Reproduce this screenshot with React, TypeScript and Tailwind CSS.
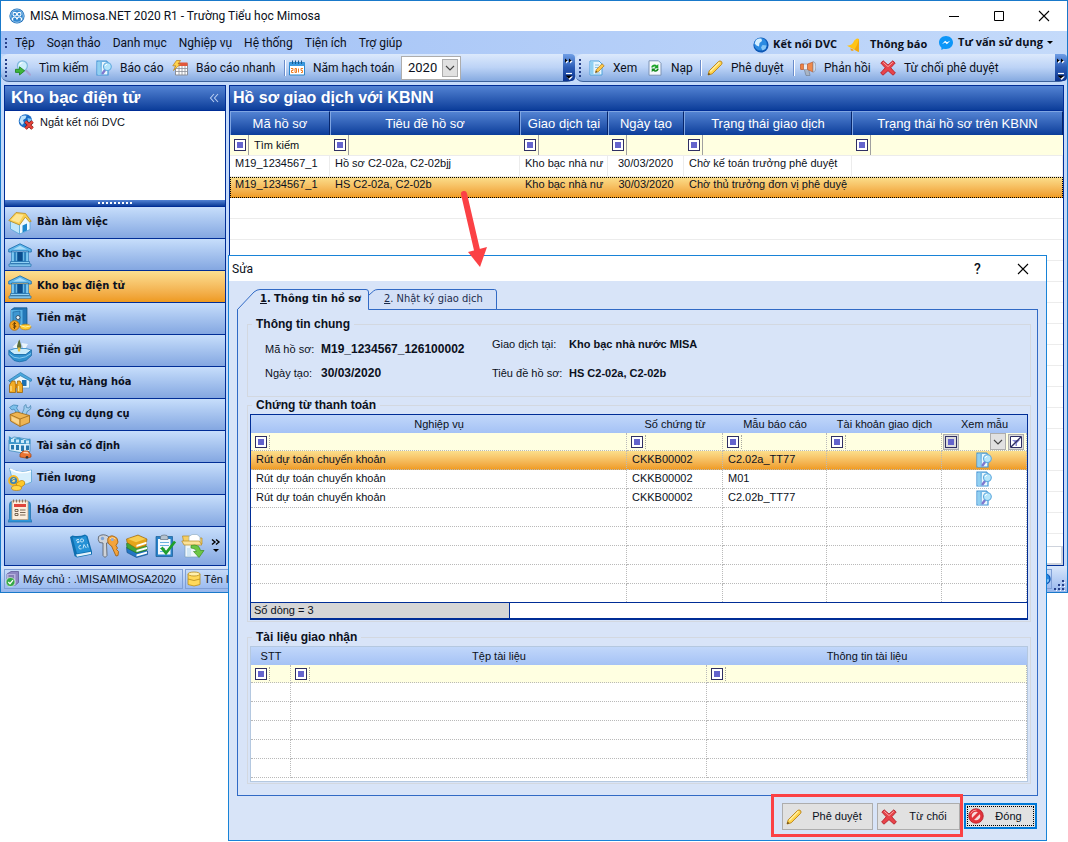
import React from "react";

type IconProps = { className?: string };

const FONT_UI = "font-['Roboto','Noto_Sans',sans-serif]";
const FONT_MENU_BOLD = "font-['Open_Sans','Noto_Sans',sans-serif]";
const FONT_GRID = "font-['Liberation_Sans',Arial,sans-serif]";
const FONT_NAV = "font-['DejaVu_Sans_Condensed','DejaVu_Sans',sans-serif]";

/* ---------- Icons ---------- */

function LogoIcon() {
  return (
    <svg viewBox="0 0 16 16" className="size-4" aria-hidden="true">
      <circle cx="8" cy="8" r="7.6" fill="#1a6cb8" />
      <circle cx="8" cy="8" r="6.3" fill="#2f86cf" stroke="#b9dcf7" strokeWidth=".8" />
      <circle cx="5.800" cy="6.200" r="1.800" fill="none" stroke="#fff" strokeWidth="1.100" />
      <circle cx="10.200" cy="6.200" r="1.800" fill="none" stroke="#fff" strokeWidth="1.100" />
      <path d="M3.600 12.200V10.500Q4 9 5.800 9T8 11.500Q8.400 9 10.200 9T12.400 10.500V12.200" fill="none" stroke="#fff" strokeWidth="1.200" />
    </svg>
  );
}

function SearchGoIcon() {
  return (
    <svg viewBox="0 0 16 16" className="size-4" aria-hidden="true">
      <path d="M11 10.500L15 14.800" stroke="#a9a4d6" strokeWidth="2.200" strokeLinecap="round" />
      <circle cx="7.400" cy="5.800" r="5" fill="#cdeefb" stroke="#7fb8dc" strokeWidth="1.200" />
      <path d="M4.500 4.500a3.400 3.400 0 0 1 3-2" stroke="#fff" strokeWidth="1.200" fill="none" />
      <path d="M0.500 9.300h4V6.800l5.200 4-5.200 4.200v-2.600h-4z" fill="#3eb53a" stroke="#19801c" strokeWidth=".8" />
    </svg>
  );
}

function ReportIcon({ className = "size-4" }: IconProps) {
  return (
    <svg viewBox="0 0 16 16" className={className} aria-hidden="true">
      <path d="M1 1.200h9.500l1.500 1.500V15H1z" fill="#eaf7fe" stroke="#4296d6" strokeWidth="1.200" />
      <path d="M1.600 1.800h3.800v3L4.800 8v6.400H1.600z" fill="#8fd0f2" />
      <path d="M5.200 2v12.500" stroke="#4296d6" strokeWidth=".8" />
      <path d="M6.700 13.200L9.200 9.800" stroke="#7f78cf" strokeWidth="2.400" strokeLinecap="round" />
      <circle cx="11.400" cy="6.600" r="3.900" fill="#b5e5fb" stroke="#5fa9dd" strokeWidth="1.100" />
      <path d="M9 6a2.400 2.400 0 0 1 2.200-1.700" stroke="#fff" fill="none" />
    </svg>
  );
}

function QuickReportIcon() {
  return (
    <svg viewBox="0 0 16 16" className="size-4" aria-hidden="true">
      <path d="M3.500 3.500h12v11.500h-12z" fill="#fff" stroke="#8a8f99" />
      <path d="M6 2.500h9.500V6H5z" fill="#e2573b" />
      <path d="M4 8.500h11M4 11.500h11M7 6v9M10 6v9M13 6v9" stroke="#8a8f99" strokeWidth=".8" />
      <path d="M4.500 0.500h4L6 4h2.500L1.500 10.500L3.600 5.800H.8z" fill="#ffd34e" stroke="#b77d13" strokeWidth=".7" />
    </svg>
  );
}

function CalendarIcon() {
  return (
    <svg viewBox="0 0 16 16" className="size-4" aria-hidden="true">
      <path d="M.5 2.500h15v12.500H.5z" fill="#fff" stroke="#2b86c9" />
      <path d="M.5 2.500h15v3.500H.5z" fill="#3b9ae0" />
      <path d="M3.500 .5v3.500M6.500 .5v3.500M9.500 .5v3.500M12.500 .5v3.500" stroke="#1b5c94" strokeWidth="1" />
      <path d="M2 8.500h2v2H2.500v2H4.500M6 8.500h1.500v4H6zM9.500 8.500v4M14 8.500h-2v2h1.500v2H12" fill="none" stroke="#ef7d22" strokeWidth="1" />
    </svg>
  );
}

function NoteEditIcon() {
  return (
    <svg viewBox="0 0 16 16" className="size-4" aria-hidden="true">
      <path d="M1 1h9l3 3v11H1z" fill="#e6f5fd" stroke="#4ea3dc" />
      <path d="M1.500 1.500h3v13h-3z" fill="#8fd0f2" />
      <path d="M6 5h4M6 7.500h3M6 13h5" stroke="#8ac0e2" />
      <path d="M6.500 12.500L7.200 9.800L13 3.800L15.200 5.800L9.300 11.700z" fill="#ffc94a" stroke="#a8741a" strokeWidth=".7" />
      <path d="M6.500 12.500l.5-1.700 1.200 1.200z" fill="#4a3718" />
    </svg>
  );
}

function RefreshPageIcon() {
  return (
    <svg viewBox="0 0 16 16" className="size-4" aria-hidden="true">
      <path d="M2 .8h9.500l2.500 2.500V15.200H2z" fill="#f6f9fd" stroke="#7c93b5" />
      <path d="M4.200 7.400c.5-3 4-3.600 5.700-2l1.400-1.400v4.200H7.100l1.400-1.400c-1-.7-2.200-.3-2.500.6z" fill="#1da427" />
      <path d="M11.800 8.800c-.5 3-4 3.600-5.700 2l-1.400 1.400V8.500h4.200L7.500 9.900c1 .7 2.200.3 2.500-1.100z" fill="#12871c" />
    </svg>
  );
}

function PencilIcon() {
  return (
    <svg viewBox="0 0 16 16" className="size-4" aria-hidden="true">
      <path d="M1 15L2.200 10.800L11.500 1.500Q13 .3 14.500 1.600Q15.700 3 14.500 4.500L5.200 13.800z" fill="#ffd34a" stroke="#b98218" strokeWidth=".9" />
      <path d="M3.300 11.500L12.500 2.300" stroke="#fff0a8" strokeWidth="1.300" />
      <path d="M1 15l.7-2.300 1.700 1.600z" fill="#5d431a" />
    </svg>
  );
}

function MegaphoneIcon() {
  return (
    <svg viewBox="0 0 16 16" className="size-4" aria-hidden="true">
      <path d="M4 8.500h4.500l1.500 7H6z" fill="#a9b4c4" stroke="#6d7889" strokeWidth=".6" />
      <path d="M1 4h6.500v5.500H1q-1-2.700 0-5.500z" fill="#e9ecf1" stroke="#8e99aa" strokeWidth=".6" />
      <path d="M.7 4h2.800v5.500H.7q-.8-2.700 0-5.500z" fill="#ee8446" stroke="#b9542a" strokeWidth=".6" />
      <path d="M7.500 4L13 2v10L7.500 9.500z" fill="#f08a4c" stroke="#b9542a" strokeWidth=".6" />
      <path d="M13 1.600q2.800.2 2.800 5.200T13 12.200z" fill="#d9dee6" stroke="#7c8798" strokeWidth=".6" />
    </svg>
  );
}

function CrossIcon() {
  return (
    <svg viewBox="0 0 16 16" className="size-4" aria-hidden="true">
      <path d="M3.200.8L8 5L12.800.8L15.200 3L10.800 7.800L15.400 13L13 15.200L8 10.700L3 15.200L.6 13L5.200 7.800L.8 3z" fill="#e8434a" stroke="#b01b24" strokeWidth=".8" />
      <path d="M3.200 2.300L8 6.600L12.800 2.300" fill="none" stroke="#f8a3a4" strokeWidth="1" />
    </svg>
  );
}

function GlobeIcon({ className = "size-4" }: IconProps) {
  return (
    <svg viewBox="0 0 16 16" className={className} aria-hidden="true">
      <circle cx="8" cy="8" r="7.600" fill="#0d57b4" />
      <circle cx="7.500" cy="7.300" r="6.300" fill="#2c8be2" />
      <path d="M3 3Q6 .9 8.500 1.800L9 4L6.500 6L6 9.500L3.500 8.500L1.600 6.500z" fill="#d6efff" />
      <path d="M9.500 8l4.200.5-1.200 3.500-3 1.500-1.500-3z" fill="#86c6f7" />
    </svg>
  );
}

function GlobeOffIcon() {
  return (
    <svg viewBox="0 0 16 16" className="size-4" aria-hidden="true">
      <circle cx="7.500" cy="7" r="6.800" fill="#1a6cc6" />
      <path d="M3 2.500Q6 .8 8.500 1.800L7.500 4.500L5 6L6 9L4 11L1.500 7.500z" fill="#bfe4fb" />
      <path d="M9.500 4l4 1v3l-3 1z" fill="#7fc3f2" />
      <path d="M7.500 7.500L14.500 14.500M14.500 7.500L7.500 14.500" stroke="#7d1712" strokeWidth="3.400" />
      <path d="M7.500 7.500L14.500 14.500M14.500 7.500L7.500 14.500" stroke="#e8443c" strokeWidth="2.200" />
    </svg>
  );
}

function BellIcon() {
  return (
    <svg viewBox="0 0 16 16" className="size-4" aria-hidden="true">
      <path d="M9.500 2.500Q11 .8 13 2L12.800 15L1 8.800Q6.500 8 7.500 5Q8 3.400 9.500 2.500z" fill="#ffc417" />
      <path d="M13 2L12.800 15L8.500 12.700Q11.500 8 13 2z" fill="#f3a70b" />
      <path d="M4.500 11.200q-.3 2.500 2.300 2.600l1.200-.9z" fill="#f29c0c" />
    </svg>
  );
}

function MessengerIcon() {
  return (
    <svg viewBox="0 0 16 16" className="size-4" aria-hidden="true">
      <path d="M8 1C4 1 1 3.900 1 7.500c0 2 .9 3.700 2.400 4.900V15l2.300-1.300c.7.200 1.500.3 2.300.3 4 0 7-2.900 7-6.500S12 1 8 1z" fill="#0d96f8" />
      <path d="M3.800 9.200L7.200 5.700L9 7.300L12.200 5.700L8.900 9.200L7.100 7.600z" fill="#fff" />
    </svg>
  );
}

function NoEntryIcon() {
  return (
    <svg viewBox="0 0 16 16" className="size-4" aria-hidden="true">
      <circle cx="8" cy="8" r="7.300" fill="#e0333b" stroke="#b3161f" strokeWidth=".7" />
      <circle cx="8" cy="8" r="4.300" fill="#f8dadb" />
      <path d="M4.500 11.500L11.500 4.500" stroke="#e0333b" strokeWidth="2.800" />
      <path d="M2.500 5.500Q4.500 1.800 8.500 2" stroke="#f79a9c" fill="none" />
    </svg>
  );
}

function HomeIcon() {
  return (
    <svg viewBox="0 0 24 24" className="size-6" aria-hidden="true">
      <path d="M2.500 10L11.500 13.500V23L2.500 18z" fill="#bfe6fb" stroke="#4b9fd4" strokeWidth=".7" />
      <path d="M11.500 13.500L17 5L22 10.500V18.500L11.500 23z" fill="#eef9ff" stroke="#4b9fd4" strokeWidth=".7" />
      <path d="M14.500 14.500L19 12.500V19.500L14.500 21.500z" fill="#1f87cc" />
      <path d="M.8 9.500L8 1.500L17.500 2.500L23.200 10.300L21.500 11L17.300 6.200L11.600 14z" fill="#f8cf51" stroke="#b98a22" strokeWidth=".8" />
      <path d="M3 9L8.500 3L15.500 3.700L11 11.800z" fill="#fde594" />
    </svg>
  );
}

function BankIcon() {
  return (
    <svg viewBox="0 0 24 24" className="size-6" aria-hidden="true">
      <path d="M3.500 9h17v11h-17z" fill="#1b78bf" />
      <path d="M9.500 9h5v9h-5z" fill="#0b4d8d" />
      <path d="M12 .8L23.300 6.300V9H20.500V8H3.500V9H.7V6.300z" fill="#5cb5ea" stroke="#1b6aa8" strokeWidth=".8" />
      <path d="M12 2.800l7 3.700H5z" fill="#a9dcf8" />
      <path d="M3.500 9h2.800v10H3.500zM7.500 9h1.600v9H7.500zM14.900 9h1.600v9h-1.600zM17.700 9h2.800v10h-2.800z" fill="#7ccaf3" stroke="#19639f" strokeWidth=".4" />
      <path d="M2.500 18.500h19v2h-19zM1 21h22v2.300H1z" fill="#8fd0f5" stroke="#1b6aa8" strokeWidth=".7" />
    </svg>
  );
}

function SafeIcon() {
  return (
    <svg viewBox="0 0 24 24" className="size-6" aria-hidden="true">
      <path d="M3 3L6 .8H19V17L16.500 19H3z" fill="#2478b8" stroke="#114e80" strokeWidth=".7" />
      <path d="M3 3H14.500V19H3z" fill="#58b0e3" />
      <path d="M5 5l7-1v13l-7 1z" fill="#3f97d1" stroke="#17609b" strokeWidth=".6" />
      <circle cx="10" cy="10.500" r="2" fill="#e9f5fc" stroke="#2b3d52" strokeWidth=".8" />
      <ellipse cx="17.500" cy="20" rx="5.500" ry="2.800" fill="#ffcb2e" stroke="#c28309" strokeWidth=".7" />
      <path d="M12 18.500q5 3 11 .3" stroke="#fff2a3" fill="none" />
      <circle cx="6.500" cy="18.500" r="4.800" fill="#f5a31f" stroke="#b16f08" strokeWidth=".8" />
      <path d="M8 16.500q-3-.8-3 .8t3 1.800q0 2-3 1M6.500 15v7" stroke="#6d4507" fill="none" />
    </svg>
  );
}

function DepositIcon() {
  return (
    <svg viewBox="0 0 24 24" className="size-6" aria-hidden="true">
      <path d="M4.500 8l5-5v8zM13.500 4l6.500 1-4 7z" fill="#f1f8fc" opacity=".9" />
      <path d="M9 7L10.500 2l1-1.500L13.300 7l-.8 5h-3z" fill="#5d6d3a" />
      <path d="M.8 11.500L7 9.500h11L23.500 11 18 15.500H6z" fill="#c9ebfb" stroke="#2784c0" strokeWidth=".8" />
      <path d="M.8 11.500L6 15.500H18L23.500 11V16.500L18 21.500Q11 24 6 21.500L.8 16z" fill="#2f91d0" stroke="#17659f" strokeWidth=".7" />
      <path d="M1.500 15q4 4.500 10 4.200T23 14.500" stroke="#86c9ef" fill="none" />
      <path d="M9.500 8.500h3l-.5 4h-2z" fill="#e7bf43" />
    </svg>
  );
}

function WarehouseIcon() {
  return (
    <svg viewBox="0 0 24 24" className="size-6" aria-hidden="true">
      <path d="M3 9L12.500 4L21.500 9v8H3z" fill="#eaf7fe" stroke="#4e9bc9" strokeWidth=".6" />
      <path d="M12.500 1.500L24 8.500L23 10.500L12.500 4.800L2 11L.5 9.500z" fill="#4ba8dd" stroke="#1d6ca3" strokeWidth=".6" />
      <path d="M14 9h4.500v6H14z" fill="#1d72b3" />
      <path d="M1.500 14l2.500-4h3l.5 4v7.500h-6zM9 14l.5-4h2.500l2.500 4v7.500H9z" fill="#f4ad26" stroke="#9b630b" strokeWidth=".8" />
      <path d="M3 15v5M10.500 15v5" stroke="#ffe08a" strokeWidth="1.300" />
      <path d="M7 13h2v4H7z" fill="#c77d10" />
    </svg>
  );
}

function ToolboxIcon() {
  return (
    <svg viewBox="0 0 24 24" className="size-6" aria-hidden="true">
      <path d="M1.500 4.500Q5 .5 10 2.500l-1.500 2.500L14 13l-2.500 1.500L6 6 4 7z" fill="#7cc0ea" stroke="#397fb0" strokeWidth=".7" />
      <path d="M13 13l3-7q-1-3.500 2-4.500l.5 3 2.500.5 1.500-2.500q1.500 4-3 5.500L16.500 15z" fill="#9fcdee" stroke="#4583ac" strokeWidth=".7" />
      <path d="M2 11.500L9 9l12.500 3.500v7L12 23.500L2.500 18z" fill="#f0b552" stroke="#9c6718" strokeWidth=".8" />
      <path d="M2 11.500l10 4.500 9.500-3.500M12 16v7.500" stroke="#9c6718" strokeWidth=".8" fill="none" />
      <path d="M3.500 13.500l7.500 3.300v4.700l-7-4z" fill="#fad58c" />
    </svg>
  );
}

function AssetIcon() {
  return (
    <svg viewBox="0 0 24 24" className="size-6" aria-hidden="true">
      <path d="M1 5L6 2L22 4.500V16.500L15 18L1 15.500z" fill="#d9effa" stroke="#2b7fb4" strokeWidth=".7" />
      <path d="M.8 1l4.500 3 6-1.500 5 2.500 6-1.500v5.500H1z" fill="#3f96ca" />
      <path d="M3 4h3v3H3zM8 4.500h3v3H8zM13 5h3v3h-3zM18 5.500h3v3h-3z" fill="#c9e9f9" />
      <path d="M3 10h3v4.500H3zM8 10h3v5H8zM13 10.500h3V16h-3zM18 10.500h3V15h-3z" fill="#2777ad" />
      <path d="M12 19l3-3h5l3 3.500v2.500l-4 1.200-7-1.200z" fill="#ea7433" stroke="#9d3f10" strokeWidth=".7" />
      <path d="M15 18l1-1.200h3.500l1.500 2z" fill="#fbd9bd" />
      <circle cx="19" cy="22.300" r="1.300" fill="#333" />
    </svg>
  );
}

function SalaryIcon() {
  return (
    <svg viewBox="0 0 24 24" className="size-6" aria-hidden="true">
      <path d="M1.500 1.500Q12 7 23.500 3V15Q15 20 5 15z" fill="#d7effc" stroke="#5ba5d3" strokeWidth=".8" />
      <path d="M2 2Q12 8 23 4" stroke="#fff" strokeWidth="1.500" fill="none" />
      <circle cx="5.500" cy="13.500" r="4.500" fill="#3c83b5" stroke="#f7b824" strokeWidth="1.800" />
      <path d="M6.800 11.800q-2.500-.8-2.500.6t2.500 1.200q0 2-2.600.8" stroke="#ffe07a" fill="none" />
      <ellipse cx="12.500" cy="17" rx="4.500" ry="3" transform="rotate(-25 12.500 17)" fill="#ffc928" stroke="#c28309" strokeWidth=".7" />
      <ellipse cx="8.500" cy="21" rx="5" ry="2.500" fill="#ffd64a" stroke="#c28309" strokeWidth=".7" />
    </svg>
  );
}

function InvoiceIcon() {
  return (
    <svg viewBox="0 0 24 24" className="size-6" aria-hidden="true">
      <path d="M4 2.500h16Q22.500 2.500 22.500 6V19.500L24 23H0L1.500 19.500V6Q1.500 2.500 4 2.500z" fill="#2f97da" stroke="#1c6ea9" strokeWidth=".7" />
      <path d="M4 2h16V20.500H4z" fill="#fbeedd" stroke="#c2a07c" strokeWidth=".8" />
      <path d="M5.500 .5v3M8.500 .5v3M11.500 .5v3M14.500 .5v3M17.500 .5v3" stroke="#8b7760" />
      <path d="M6 5h12v3H6z" fill="#e0453c" />
      <path d="M7 10.500h3v2H7zM7 14.500h3v2H7z" fill="none" stroke="#6a5846" strokeWidth=".9" />
      <path d="M12 11h5.500M12 13.500h5.500M12 16h5.500" stroke="#6a5846" strokeWidth=".9" />
    </svg>
  );
}

function LedgerIcon() {
  return (
    <svg viewBox="0 0 24 24" className="size-6" aria-hidden="true">
      <path d="M1 3L3.500 1.500Q10 3 16 .5L18.500 2L23 17.500V20.500L8 23.500L5.500 22z" fill="#0f6fb0" />
      <path d="M3.500 3.300Q10 4.500 17 1.800L21.500 17L8 19.500z" fill="#2592d6" />
      <path d="M7 20.500L22 17.800V20L8 22.800z" fill="#e3f2fb" />
      <path d="M10 5.500q-3-.3-2.600 1t2.700.8q.6 1.800-2.200 1.300M12 5q2-.6 2.500 1t-1.300 2-1.900-1.500zM12 11.500q-2.500-.3-2.200 2t2.800 1.300M14 14.500l1-4 2.300 3.500M18.300 10l.9 3.500" stroke="#cdeafb" strokeWidth=".9" fill="none" />
    </svg>
  );
}

function KeysIcon() {
  return (
    <svg viewBox="0 0 24 24" className="size-6" aria-hidden="true">
      <path d="M1.500 2.500q4.500-3.500 10 0l.5 6-2.500.5.5 12.500-2 2-2-2V9L2.500 8.500Q.5 6 1.500 2.500z" fill="#cfd3d9" stroke="#5f656f" strokeWidth=".9" />
      <circle cx="5.500" cy="4.500" r="1.700" fill="#7fa4d6" />
      <path d="M11 4q3.500-4.500 9 .3 2.500 4-1 7.200l1.500 2.500-1 1.500 2 2-.5 4-2 .5-4.500-10q-5-2.500-3.500-8z" fill="#f3a43c" stroke="#a0631a" strokeWidth=".9" />
      <path d="M12.500 5q3-3 6 0" stroke="#ffdc9c" fill="none" />
      <circle cx="15.300" cy="5.500" r="1.500" fill="#8eace0" />
    </svg>
  );
}

function BooksIcon() {
  return (
    <svg viewBox="0 0 24 24" className="size-6" aria-hidden="true">
      <path d="M1.500 13.500L10 11L22.500 17v3.500L11.500 23.500L2 18.500z" fill="#2477c4" stroke="#134a83" strokeWidth=".6" />
      <path d="M11.500 20.500l10.500-3v2L11.500 22.500z" fill="#fff" />
      <path d="M1.500 9.500L10 7l12 5.500V16l-10.500 3L2 14z" fill="#3fa63a" stroke="#1e6c20" strokeWidth=".6" />
      <path d="M11.500 16l10.500-3v2L11.500 18z" fill="#fff" />
      <path d="M1.500 5L13 1l9 4-1 6.500-9.500 3-9.500-6z" fill="#e5a51b" stroke="#8d5d0a" strokeWidth=".6" />
      <path d="M3 5l10-3.300L20.500 5 11 8.300z" fill="#f7cd52" />
      <path d="M11.500 11l10-3.200v2l-10 3.200z" fill="#fff" />
    </svg>
  );
}

function TaskIcon() {
  return (
    <svg viewBox="0 0 24 24" className="size-6" aria-hidden="true">
      <path d="M3 2.500h16.500v20H3z" fill="#2a82c9" stroke="#165b94" strokeWidth=".7" />
      <path d="M5 5h12.500v15.500H5z" fill="#f4fafe" />
      <path d="M7.500 3q0-2 3.700-2T15 3v2.500H7.500z" fill="#b5c2cf" stroke="#63717f" strokeWidth=".7" />
      <path d="M7 8.500h9M7 11.500h9M7 14.500h5M7 17.500h4" stroke="#6ab0e0" />
      <path d="M8.500 13.500l4.500 5.500L22 7.500" stroke="#1f9f2c" strokeWidth="2.800" fill="none" />
    </svg>
  );
}

function ExportIcon() {
  return (
    <svg viewBox="0 0 24 24" className="size-6" aria-hidden="true">
      <path d="M4 9h13v14H4z" fill="#eef6fb" stroke="#7a9db9" strokeWidth=".7" />
      <path d="M1.500 2h7l1.500 2H21v6H3z" fill="#f6cf65" stroke="#b58a24" strokeWidth=".7" />
      <path d="M8 2.500l3-2h5l3 2.500V9H8z" fill="#fff" stroke="#8aa7bd" strokeWidth=".6" />
      <path d="M.8 7h17.500l2.500 4H3z" fill="#fbe29a" stroke="#b58a24" strokeWidth=".7" />
      <path d="M6 14h4v8H6z" fill="#cfe6f5" />
      <path d="M10 11.500q8-2 9.500 5H23l-5 7-5.500-6h3q-1-3.500-5.500-3.500z" fill="#6cc644" stroke="#3b8f1f" strokeWidth=".7" />
    </svg>
  );
}

function ServerIcon() {
  return (
    <svg viewBox="0 0 16 16" className="size-4 shrink-0" aria-hidden="true">
      <path d="M2 3l4-2.500h7.500v11L10.500 14H2z" fill="#8d86c2" stroke="#57508f" strokeWidth=".7" />
      <path d="M2 3h8.500v11H2z" fill="#b7b2de" />
      <path d="M3.500 5h5.500M3.500 7h5.500" stroke="#514a8c" />
      <circle cx="5.500" cy="11" r="4.500" fill="#35a845" stroke="#fff" strokeWidth=".6" />
      <path d="M3.300 11l1.700 1.700 3-3.500" stroke="#fff" strokeWidth="1.300" fill="none" />
    </svg>
  );
}

function DatabaseIcon() {
  return (
    <svg viewBox="0 0 16 16" className="size-4 shrink-0" aria-hidden="true">
      <path d="M2 3v10.500q6 3 12 0V3z" fill="#ffd95a" stroke="#b88d1c" strokeWidth=".8" />
      <ellipse cx="8" cy="3" rx="6" ry="2" fill="#fff0ad" stroke="#b88d1c" strokeWidth=".8" />
      <path d="M2 8q6 3 12 0" stroke="#b88d1c" strokeWidth=".8" fill="none" />
    </svg>
  );
}

function ChevronDown() {
  return (
    <svg viewBox="0 0 10 6" className="h-1.5 w-2.5" aria-hidden="true">
      <path d="M1 1l4 4 4-4" fill="none" stroke="#444" strokeWidth="1.100" />
    </svg>
  );
}

/* ---------- Small parts ---------- */

function Grip({ count }: { count: number }) {
  return (
    <span className="flex w-2.5 shrink-0 flex-col items-start gap-0.5 self-center" aria-hidden="true">
      {Array.from({ length: count }, (_, i) => (
        <span key={i} className="size-0.5 bg-[#27418a]" />
      ))}
    </span>
  );
}

function OverflowButton({ label }: { label: string }) {
  return (
    <button
      type="button"
      aria-label={label}
      className="flex w-3 shrink-0 items-center justify-center self-stretch rounded-r-sm bg-linear-to-b from-[#6f9ee6] via-[#2c5cb5] to-[#0a3390]"
    >
      <svg viewBox="0 0 10 24" className="h-6 w-2.5" aria-hidden="true">
        <path d="M2 3.500l2.500 2L2 7.500zM6 3.500l2.500 2L6 7.500z" fill="#fff" />
        <path d="M1 2.500l2.500 2L1 6.500zM5 2.500l2.500 2L5 6.500z" fill="#000" />
        <path d="M2 17.500h6" stroke="#fff" strokeWidth="1.200" />
        <path d="M2.500 20.500h6.500L5.700 24z" fill="#fff" />
        <path d="M1.500 19.500H8L4.700 22.800z" fill="#000" />
      </svg>
    </button>
  );
}

function FilterButton({ label, raised = false }: { label: string; raised?: boolean }) {
  return (
    <button
      type="button"
      aria-label={`Điều kiện lọc ${label}`}
      className={
        raised
          ? "flex size-4 shrink-0 items-center justify-center border border-[#adadad] bg-[#dcdcdc]"
          : "flex size-3 shrink-0 items-center justify-center"
      }
    >
      <span className={`flex size-3 items-center justify-center border border-[#2f2f63] ${raised ? "" : "bg-white"}`}>
        <span className="size-1.5 bg-[#6464cc]" />
      </span>
    </button>
  );
}

function FilterCell({ label, value, dotted = false }: { label: string; value?: string; dotted?: boolean }) {
  return (
    <div className="flex h-full items-center pl-1">
      <FilterButton label={label} />
      <input
        type="text"
        aria-label={`Lọc ${label}`}
        defaultValue={value}
        className={
          dotted
            ? "ml-0.5 h-3.5 w-full min-w-0 border-l border-dotted border-[#a8a8a0] bg-transparent pl-1 outline-none"
            : "ml-0.5 h-5 w-full min-w-0 border-l border-[#a0a0a0] bg-transparent pl-[5px] outline-none"
        }
      />
    </div>
  );
}

function ToolButton({ icon, label, width }: { icon: React.ReactNode; label: string; width: string }) {
  return (
    <button type="button" className={`flex shrink-0 items-center gap-2 whitespace-nowrap ${width}`}>
      {icon}
      {label}
    </button>
  );
}

function Separator() {
  return <span className="h-4 w-0.5 shrink-0 self-center border-r border-white bg-[#6a8ccb]" aria-hidden="true" />;
}

/* ---------- Main window ---------- */

const menuItems = ["Tệp", "Soạn thảo", "Danh mục", "Nghiệp vụ", "Hệ thống", "Tiện ích", "Trợ giúp"];

function TitleBar() {
  return (
    <header className="flex h-[30px] items-center bg-white pl-2">
      <LogoIcon />
      <h1 className="ml-[5px] flex-1 text-xs">MISA Mimosa.NET 2020 R1 - Trường Tiểu học Mimosa</h1>
      <button type="button" aria-label="Thu nhỏ" className="flex h-full w-[45px] items-center justify-center">
        <svg viewBox="0 0 12 12" className="size-3" aria-hidden="true"><path d="M1 6.500h10" stroke="#000" /></svg>
      </button>
      <button type="button" aria-label="Phóng to" className="flex h-full w-[45px] items-center justify-center">
        <svg viewBox="0 0 12 12" className="size-3" aria-hidden="true"><path d="M1.500 1.500h9v9h-9z" stroke="#000" fill="none" /></svg>
      </button>
      <button type="button" aria-label="Đóng cửa sổ" className="flex h-full w-[46px] items-center justify-center">
        <svg viewBox="0 0 12 12" className="size-3" aria-hidden="true"><path d="M1 1l10 10M11 1L1 11" stroke="#000" strokeWidth="1.100" /></svg>
      </button>
    </header>
  );
}

function MenuBar() {
  return (
    <div className="flex h-[23px] items-center bg-linear-to-r from-[#9ebef5] to-[#c4dafa] pl-1">
      <Grip count={3} />
      <nav className="flex flex-1 gap-3">
        {menuItems.map((item) => (
          <button key={item} type="button" className="text-xs leading-5 whitespace-nowrap">
            {item}
          </button>
        ))}
      </nav>
      <div className={`flex items-center pr-3.5 text-[11px] font-bold whitespace-nowrap ${FONT_MENU_BOLD}`}>
        <button type="button" className="flex w-[93px] items-center gap-1 pt-1">
          <GlobeIcon />
          Kết nối DVC
        </button>
        <button type="button" className="flex w-[92px] items-center gap-2 pt-1">
          <BellIcon />
          Thông báo
        </button>
        <button type="button" className="flex items-center gap-1">
          <MessengerIcon />
          Tư vấn sử dụng
          <span className="border-x-[3px] border-t-[3px] border-x-transparent border-t-black" aria-hidden="true" />
        </button>
      </div>
    </div>
  );
}

function ToolBar() {
  const strip = "flex border-b border-[#3b619c] bg-linear-to-b from-[#dce9fc] via-[#bcd3f6] to-[#86aae0]";
  return (
    <div className="flex h-7 bg-[#c4dafa] text-xs">
      <div className={`w-[574px] shrink-0 rounded-lg pl-1 ${strip}`}>
        <Grip count={5} />
        <div className="flex flex-1">
          <ToolButton icon={<SearchGoIcon />} label="Tìm kiếm" width="w-[81px]" />
          <ToolButton icon={<ReportIcon />} label="Báo cáo" width="w-[76px]" />
          <ToolButton icon={<QuickReportIcon />} label="Báo cáo nhanh" width="w-28" />
          <Separator />
          <label className="flex items-center gap-2 pl-[3px] whitespace-nowrap">
            <CalendarIcon />
            <span className="w-20">Năm hạch toán</span>
            <span className="relative flex h-6 w-[60px] items-center border border-[#adadad] bg-white">
              <select defaultValue="2020" className="h-full w-full appearance-none bg-transparent pl-1.5 text-[13px] outline-none">
                <option>2020</option>
              </select>
              <span className="pointer-events-none absolute inset-y-0.5 right-0.5 flex w-4 items-center justify-center border border-[#adadad] bg-[#e1e1e1]">
                <ChevronDown />
              </span>
            </span>
          </label>
        </div>
        <OverflowButton label="Thêm nút thanh công cụ" />
      </div>
      <div className={`min-w-0 flex-1 rounded-lg pl-1 ${strip}`}>
        <Grip count={5} />
        <div className="flex flex-1">
          <ToolButton icon={<NoteEditIcon />} label="Xem" width="w-[58px]" />
          <ToolButton icon={<RefreshPageIcon />} label="Nạp" width="w-[53px]" />
          <Separator />
          <ToolButton icon={<PencilIcon />} label="Phê duyệt" width="w-[91px] pl-[5px]" />
          <Separator />
          <ToolButton icon={<MegaphoneIcon />} label="Phản hồi" width="w-[85px] pl-[5px]" />
          <ToolButton icon={<CrossIcon />} label="Từ chối phê duyệt" width="w-[140px]" />
        </div>
        <OverflowButton label="Thêm nút duyệt" />
      </div>
    </div>
  );
}

const navItems: { label: string; icon: React.ReactNode; active?: boolean }[] = [
  { label: "Bàn làm việc", icon: <HomeIcon /> },
  { label: "Kho bạc", icon: <BankIcon /> },
  { label: "Kho bạc điện tử", icon: <BankIcon />, active: true },
  { label: "Tiền mặt", icon: <SafeIcon /> },
  { label: "Tiền gửi", icon: <DepositIcon /> },
  { label: "Vật tư, Hàng hóa", icon: <WarehouseIcon /> },
  { label: "Công cụ dụng cụ", icon: <ToolboxIcon /> },
  { label: "Tài sản cố định", icon: <AssetIcon /> },
  { label: "Tiền lương", icon: <SalaryIcon /> },
  { label: "Hóa đơn", icon: <InvoiceIcon /> },
];

const shortcuts: { label: string; icon: React.ReactNode }[] = [
  { label: "Sổ cái", icon: <LedgerIcon /> },
  { label: "Khóa sổ", icon: <KeysIcon /> },
  { label: "Sổ sách", icon: <BooksIcon /> },
  { label: "Công việc", icon: <TaskIcon /> },
  { label: "Xuất khẩu", icon: <ExportIcon /> },
];

const navyHeader = "bg-linear-to-b from-[#5383d3] to-[#0b3d9a] text-white";

function Sidebar() {
  return (
    <aside className="flex w-[222px] shrink-0 flex-col border border-[#002d96] bg-white">
      <div className={`flex h-[25px] items-center justify-between border-b border-[#002d96] px-1.5 ${navyHeader}`}>
        <h2 className={`text-[17px] font-bold ${FONT_GRID}`}>Kho bạc điện tử</h2>
        <button type="button" aria-label="Thu gọn" className="size-2.5">
          <svg viewBox="0 0 10 10" aria-hidden="true"><path d="M5 1L1.500 5L5 9M9 1L5.500 5L9 9" fill="none" stroke="#b7cdf2" strokeWidth="1.100" /></svg>
        </button>
      </div>
      <div className="flex h-[89px] flex-col items-start pt-px pl-[13px]">
        <a href="#ngat-ket-noi" className={`flex h-5 items-center gap-1.5 text-[11px] ${FONT_GRID}`}>
          <GlobeOffIcon />
          Ngắt kết nối DVC
        </a>
      </div>
      <div className={`flex h-1.5 items-center justify-center gap-0.5 ${navyHeader}`} aria-hidden="true">
        {Array.from({ length: 9 }, (_, i) => (
          <span key={i} className="size-0.5 bg-white" />
        ))}
      </div>
      <nav className={FONT_NAV}>
        {navItems.map((item) => (
          <a
            key={item.label}
            href="#phan-he"
            aria-current={item.active ? "page" : undefined}
            className={`flex h-8 items-center gap-[5px] border-t border-[#002d96] pl-[3px] text-[11px] font-bold bg-linear-to-b ${
              item.active ? "from-[#fbdf90] to-[#ee9a1c]" : "from-[#c7defb] to-[#84a7e1]"
            }`}
          >
            {item.icon}
            {item.label}
          </a>
        ))}
      </nav>
      <div className="flex h-[39px] items-center justify-end gap-1 border-t border-[#002d96] bg-linear-to-b from-[#c7defb] to-[#84a7e1] pr-1">
        {shortcuts.map((s) => (
          <button key={s.label} type="button" aria-label={s.label}>
            {s.icon}
          </button>
        ))}
        <button type="button" aria-label="Thêm phân hệ" className="h-4 w-3">
          <svg viewBox="0 0 12 16" aria-hidden="true">
            <path d="M3 1.500l3 2.500L3 6.500M7 1.500l3 2.500L7 6.500" fill="none" stroke="#000" strokeWidth="1.400" />
            <path d="M4 11h6l-3 3z" />
          </svg>
        </button>
      </div>
    </aside>
  );
}

const recordColumns = ["Mã hồ sơ", "Tiêu đề hồ sơ", "Giao dịch tại", "Ngày tạo", "Trạng thái giao dịch", "Trạng thái hồ sơ trên KBNN"];
const records = [
  ["M19_1234567_1", "Hồ sơ C2-02a, C2-02bjj", "Kho bạc nhà nư", "30/03/2020", "Chờ kế toán trưởng phê duyệt", ""],
  ["M19_1234567_1", "HS C2-02a, C2-02b", "Kho bạc nhà nư", "30/03/2020", "Chờ thủ trưởng đơn vị phê duyệ", ""],
];

function RecordsPanel() {
  return (
    <section className="flex min-w-0 flex-1 flex-col border border-[#002d96] bg-white">
      <h2 className={`h-[25px] border-b border-[#002d96] pl-[3px] text-base leading-6 font-bold ${navyHeader} ${FONT_GRID}`}>
        Hồ sơ giao dịch với KBNN
      </h2>
      <table className={`w-full table-fixed border-separate border-spacing-0 text-[11px] ${FONT_GRID}`}>
        <colgroup>
          <col className="w-[100px]" />
          <col className="w-[190px]" />
          <col className="w-[88px]" />
          <col className="w-[76px]" />
          <col className="w-[168px]" />
          <col />
        </colgroup>
        <thead>
          <tr>
            {recordColumns.map((c) => (
              <th key={c} className={`h-6 border-t border-r border-l border-t-[#7fa5e2] border-r-[#06256b] border-l-[#7fa5e2] p-0 text-[13px] font-normal ${navyHeader}`}>
                {c}
              </th>
            ))}
          </tr>
        </thead>
        <tbody>
          <tr className="bg-[#ffffe1]">
            {recordColumns.map((c, i) => (
              <td key={c} className="h-[21px] border-b border-[#ececec] p-0">
                <FilterCell label={c} value={i === 0 ? "Tìm kiếm" : undefined} />
              </td>
            ))}
          </tr>
          {records.map((r, ri) => (
            <tr
              key={r[1]}
              className={
                ri === 1
                  ? "bg-linear-to-b from-[#fbdf8c] to-[#ee991b] outline-1 -outline-offset-1 outline-dotted outline-black"
                  : ""
              }
            >
              {r.map((v, i) => (
                <td
                  key={i}
                  className={`h-[21px] overflow-hidden py-0 align-top leading-[15px] whitespace-nowrap ${
                    ri === 1 ? "" : "border-r border-b border-[#ececec]"
                  } ${i === 3 ? "px-0 text-center" : "pr-0 pl-[5px]"}`}
                >
                  {v}
                </td>
              ))}
            </tr>
          ))}
          {Array.from({ length: 16 }, (_, i) => (
            <tr key={i}>
              <td colSpan={6} className="h-[21px] border-b border-[#ececec] p-0" />
            </tr>
          ))}
        </tbody>
      </table>
      <div className="flex-1" />
      <div className="h-[19px] border-2 border-t border-[#ced3dc]" />
    </section>
  );
}

function StatusBar() {
  const cell = "flex h-5 items-center gap-0.5 border border-[#7f9fd6] bg-linear-to-b from-[#c6dbf9] to-[#9dbcf0]";
  return (
    <footer className={`flex h-[26px] items-center gap-0.5 bg-linear-to-b from-[#d9e7fb] to-[#96b6ec] pl-[3px] text-[11px] ${FONT_GRID}`}>
      <div className={`w-[179px] shrink-0 whitespace-nowrap ${cell}`}>
        <ServerIcon />
        Máy chủ : .\MISAMIMOSA2020
      </div>
      <div className={`min-w-0 flex-1 whitespace-nowrap ${cell}`}>
        <DatabaseIcon />
        <span>Tên l</span>
        <span className="flex-1" />
        <GlobeIcon className="size-3" />
      </div>
      <svg viewBox="0 0 12 12" className="mr-px size-3 self-end" aria-hidden="true">
        <path d="M8 0h2v2H8zM4 4h2v2H4zM8 4h2v2H8zM0 8h2v2H0zM4 8h2v2H4zM8 8h2v2H8z" fill="#27418a" />
        <path d="M10 2h1v1h-1zM6 6h1v1H6zM10 6h1v1h-1zM2 10h1v1H2zM6 10h1v1H6zM10 10h1v1h-1z" fill="#fff" />
      </svg>
    </footer>
  );
}

/* ---------- Dialog ---------- */

const voucherColumns = ["Nghiệp vụ", "Số chứng từ", "Mẫu báo cáo", "Tài khoản giao dịch", "Xem mẫu"];
const vouchers = [
  ["Rút dự toán chuyển khoản", "CKKB00002", "C2.02a_TT77"],
  ["Rút dự toán chuyển khoản", "CKKB00002", "M01"],
  ["Rút dự toán chuyển khoản", "CKKB00002", "C2.02b_TT77"],
];
const documentColumns = ["STT", "Tệp tài liệu", "Thông tin tài liệu"];

const dottedCell = "border-r border-b border-dotted border-[#b9b9b9]";
const lightHeader = "h-[18px] bg-linear-to-b from-[#c1d7fa] to-[#a5c2f5] p-0 leading-4 font-normal";

function VoucherTable() {
  return (
    <div className="border border-b-2 border-[#002d96] bg-white">
      <table className="w-full table-fixed border-separate border-spacing-0 text-[11px]">
        <colgroup>
          <col />
          <col className="w-24" />
          <col className="w-[104px]" />
          <col className="w-[115px]" />
          <col className="w-[85px]" />
        </colgroup>
        <thead>
          <tr>
            {voucherColumns.map((c) => (
              <th key={c} className={lightHeader}>{c}</th>
            ))}
          </tr>
        </thead>
        <tbody>
          <tr className="bg-[#ffffe1]">
            {voucherColumns.map((c, i) => (
              <td key={c} className={`h-[18px] p-0 ${dottedCell}`}>
                {i < 4 ? (
                  <FilterCell label={c} dotted />
                ) : (
                  <div className="flex items-center pl-px">
                    <FilterButton label={c} raised />
                    <span className="relative ml-auto flex h-[17px] w-4 items-center justify-center border border-[#adadad] bg-[#e1e1e1]">
                      <ChevronDown />
                      <select aria-label={`Lọc ${c}`} className="absolute inset-0 appearance-none opacity-0">
                        <option>Tất cả</option>
                      </select>
                    </span>
                    <button type="button" aria-label="Xóa điều kiện lọc" className="mx-0.5 flex size-4 items-center justify-center border border-[#adadad] bg-[#dcdcdc]">
                      <svg viewBox="0 0 12 12" className="size-3" aria-hidden="true">
                        <path d="M.5.5h11v11H.5z" fill="#fff" stroke="#2f2f63" />
                        <path d="M2 4h8L7 7v3H5.500V7z" fill="#8a8ad8" />
                        <path d="M1 11L11 1" stroke="#2f2f63" strokeWidth="1.300" />
                      </svg>
                    </button>
                  </div>
                )}
              </td>
            ))}
          </tr>
          {vouchers.map((v, ri) => (
            <tr key={v[2]} className={ri === 0 ? "bg-linear-to-b from-[#fbdf8c] to-[#ee991b]" : ""}>
              {v.map((text, i) => (
                <td key={i} className={`h-[19px] py-0 pr-0 pl-[5px] align-top leading-4 whitespace-nowrap ${dottedCell}`}>{text}</td>
              ))}
              <td className={`p-0 ${dottedCell}`} />
              <td className={`p-0 ${dottedCell}`}>
                <button type="button" aria-label={`Xem mẫu ${v[2]}`} className="mx-auto block size-4">
                  <ReportIcon />
                </button>
              </td>
            </tr>
          ))}
          {Array.from({ length: 5 }, (_, ri) => (
            <tr key={ri}>
              {voucherColumns.map((c) => (
                <td key={c} className={`p-0 ${dottedCell} ${ri === 4 ? "h-[18px] border-b-0" : "h-[19px]"}`} />
              ))}
            </tr>
          ))}
        </tbody>
      </table>
      <div className="flex h-4 border-t border-[#002d96] text-[11px] leading-[15px]">
        <span className="w-[259px] border-r border-[#002d96] bg-[#d6d6d6] pl-[3px]">Số dòng = 3</span>
      </div>
    </div>
  );
}

function DocumentTable() {
  return (
    <div className="border border-[#b4c8e0] bg-white pb-[3px]">
      <table className="w-full table-fixed border-separate border-spacing-0 text-[11px]">
        <colgroup>
          <col className="w-10" />
          <col />
          <col className="w-80" />
        </colgroup>
        <thead>
          <tr>
            {documentColumns.map((c) => (
              <th key={c} className={lightHeader}>{c}</th>
            ))}
          </tr>
        </thead>
        <tbody>
          <tr className="bg-[#ffffe1]">
            {documentColumns.map((c) => (
              <td key={c} className={`h-[18px] p-0 ${dottedCell}`}>
                <FilterCell label={c} dotted />
              </td>
            ))}
          </tr>
          {Array.from({ length: 5 }, (_, ri) => (
            <tr key={ri}>
              {documentColumns.map((c) => (
                <td key={c} className={`h-[19px] p-0 ${dottedCell}`} />
              ))}
            </tr>
          ))}
        </tbody>
      </table>
    </div>
  );
}

const fieldsetClass = "mr-1.5 ml-[9px] min-w-0 border border-[#d3d8e0]";
const legendClass = "ml-1 px-1 text-xs leading-4 font-bold";

function EditDialog() {
  return (
    <div
      role="dialog"
      aria-label="Sửa"
      className={`absolute top-[255px] right-[21px] left-[228px] border border-[#1883d7] bg-[#d8e4f8] ${FONT_GRID}`}
    >
      <div className={`flex h-[25px] items-center bg-white pl-[3px] ${FONT_UI}`}>
        <h2 className="flex-1 text-xs">Sửa</h2>
        <button type="button" aria-label="Trợ giúp" className="w-[45px] text-sm font-medium">?</button>
        <button type="button" aria-label="Đóng hộp thoại" className="flex w-[46px] items-center justify-center">
          <svg viewBox="0 0 12 12" className="size-3" aria-hidden="true"><path d="M1 1l10 10M11 1L1 11" stroke="#000" strokeWidth="1.100" /></svg>
        </button>
      </div>

      <div className="px-2 pt-2">
        <div role="tablist" className={`relative z-10 -mb-px flex text-[11px] ${FONT_NAV}`}>
          <button type="button" role="tab" aria-selected="true" className="relative h-[21px] w-[132px] pl-[23px] text-left font-bold">
            <svg viewBox="0 0 132 21" className="absolute inset-0 h-[21px] w-[132px]" aria-hidden="true">
              <path d="M.5 21v-.5L17 3Q20 .5 23 .5H129Q131.500.5 131.500 3V21z" fill="#d8e4f8" />
              <path d="M.5 21v-.5L17 3Q20 .5 23 .5H129Q131.500.5 131.500 3V20.500" fill="none" stroke="#316ac5" />
            </svg>
            <span className="relative"><u>1</u>. Thông tin hồ sơ</span>
          </button>
          <button type="button" role="tab" aria-selected="false" className="relative h-[21px] w-32 pl-[15px] text-left">
            <svg viewBox="0 0 128 21" className="absolute inset-0 h-[21px] w-32" aria-hidden="true">
              <path d="M0 6L4.500 2Q6 .5 9 .5H125.500Q127.500.5 127.500 3V20.500H0z" fill="#d3e0f7" />
              <path d="M0 6L4.500 2Q6 .5 9 .5H125.500Q127.500.5 127.500 3V20.500H0" fill="none" stroke="#316ac5" />
            </svg>
            <span className="relative text-[#1c2c4c]"><u>2</u>. Nhật ký giao dịch</span>
          </button>
        </div>

        <div role="tabpanel" className="border border-[#316ac5] pt-1.5 pb-[11px]">
          <fieldset className={fieldsetClass}>
            <legend className={legendClass}>Thông tin chung</legend>
            <div className="flex pb-[15px] pl-[17px] text-[11px] leading-4">
              <dl className="grid w-[227px] shrink-0 grid-cols-[56px_1fr] gap-y-2 pt-[9px]">
                <dt>Mã hồ sơ:</dt>
                <dd className="text-xs leading-4 font-bold">M19_1234567_126100002</dd>
                <dt>Ngày tạo:</dt>
                <dd className="text-xs leading-4 font-bold">30/03/2020</dd>
              </dl>
              <dl className="grid flex-1 grid-cols-[77px_1fr] gap-y-[13px] pt-1">
                <dt>Giao dịch tại:</dt>
                <dd className="font-bold">Kho bạc nhà nước MISA</dd>
                <dt>Tiêu đề hồ sơ:</dt>
                <dd className="font-bold">HS C2-02a, C2-02b</dd>
              </dl>
            </div>
          </fieldset>

          <fieldset className={fieldsetClass}>
            <legend className={legendClass}>Chứng từ thanh toán</legend>
            <div className="p-px px-0.5">
              <VoucherTable />
            </div>
          </fieldset>

          <fieldset className={`mt-[7px] ${fieldsetClass}`}>
            <legend className={legendClass}>Tài liệu giao nhận</legend>
            <div className="p-px px-0.5">
              <DocumentTable />
            </div>
          </fieldset>
        </div>
      </div>

      <div className="flex justify-end gap-1 pt-[7px] pr-[9px] pb-2.5 text-[11px]">
        <div className="relative flex gap-1">
          <button type="button" className="flex h-[27px] w-[91px] items-center border border-[#adadad] bg-[#e1e1e1] pl-[3px]">
            <PencilIcon />
            <span className="flex-1">Phê duyệt</span>
          </button>
          <button type="button" className="flex h-[27px] w-[83px] items-center border border-[#adadad] bg-[#e1e1e1] pl-[3px]">
            <CrossIcon />
            <span className="flex-1">Từ chối</span>
          </button>
          <span className="pointer-events-none absolute -top-[9px] -right-[3px] -bottom-[7px] -left-[11px] border-3 border-[#fb4145]" aria-hidden="true" />
        </div>
        <button type="button" className="flex h-[26px] w-[73px] items-center border-2 border-[#0078d7] bg-[#e1e1e1] p-px">
          <span className="flex h-full w-full items-center border border-dotted border-black">
            <NoEntryIcon />
            <span className="flex-1">Đóng</span>
          </span>
        </button>
      </div>
    </div>
  );
}

export default function App() {
  return (
    <main className={`relative min-h-screen bg-white text-[#0b1020] ${FONT_UI}`}>
      <div className="border border-[#1979ca]">
        <TitleBar />
        <MenuBar />
        <ToolBar />
        <div className="flex gap-[3px] bg-[#c4dafa] px-[3px] pt-[3px]">
          <Sidebar />
          <RecordsPanel />
        </div>
        <StatusBar />
      </div>

      <EditDialog />

      <svg viewBox="0 0 40 90" className="pointer-events-none absolute top-[186px] left-[452px] h-[90px] w-10" aria-hidden="true">
        <path d="M12 8L25 64" stroke="#fb4145" strokeWidth="6" strokeLinecap="round" />
        <path d="M16 66L35 61L28 81z" fill="#fb4145" />
      </svg>
    </main>
  );
}
